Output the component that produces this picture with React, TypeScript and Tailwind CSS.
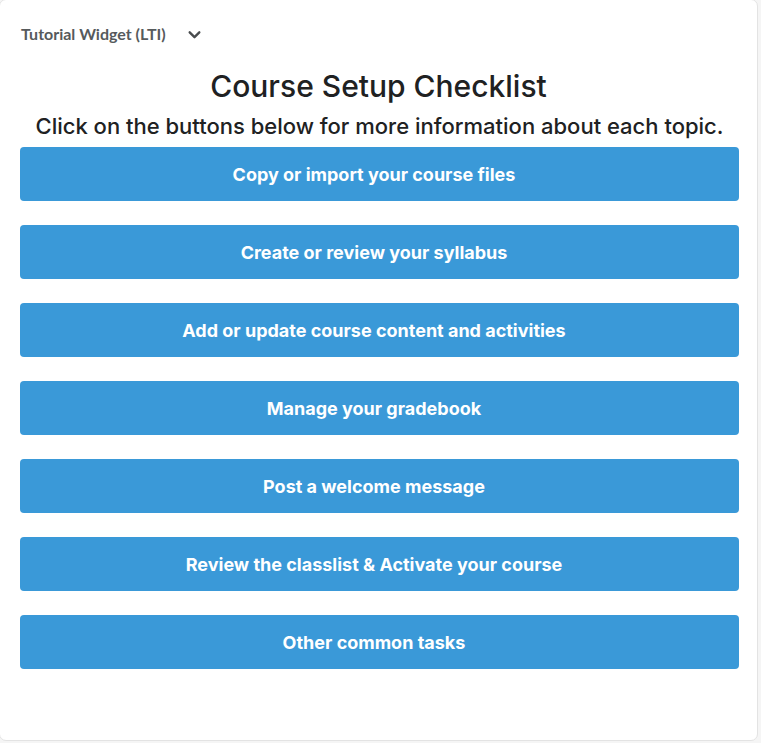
import React from "react";

const topics = [
  "Copy or import your course files",
  "Create or review your syllabus",
  "Add or update course content and activities",
  "Manage your gradebook",
  "Post a welcome message",
  "Review the classlist & Activate your course",
  "Other common tasks",
];

const App: React.FC = () => {
  return (
    <div className="w-[761px] h-[743px] bg-[#f5f5f5] overflow-hidden">
      <div className="w-[759px] h-[742px] bg-white border border-[#e3e3e3] rounded-[7px] -mt-px -ml-px">
        <div className="flex items-center gap-[21px] pl-[21px] pt-[22px] h-[46px] font-['Lato',sans-serif] text-[16px] font-bold text-[#565a5c]">
          <span>Tutorial Widget (LTI)</span>
          <svg width="15" height="15" viewBox="0 0 14 14" fill="none">
            <path d="M2.5 5 L7 9.5 L11.5 5" stroke="#494c4e" strokeWidth="2.2" strokeLinecap="round" strokeLinejoin="round" />
          </svg>
        </div>
        <div className="font-['Inter',sans-serif] text-[#202122] text-center mt-[22px]">
          <h1 className="text-[30px] font-medium leading-[36px]">Course Setup Checklist</h1>
          <p className="text-[22px] font-medium leading-[30px] mt-[7px] pl-[2px]">
            Click on the buttons below for more information about each topic.
          </p>
        </div>
        <div className="flex flex-col gap-[24px] pl-[20px] mt-[6px]">
          {topics.map((t, i) => (
            <button
              key={i}
              className="h-[54px] w-[719px] rounded-[4px] bg-[#3a99d8] pr-[11px] text-white text-[18px] font-bold font-['Inter',sans-serif]"
            >
              {t}
            </button>
          ))}
        </div>
      </div>
    </div>
  );
};

export default App;
